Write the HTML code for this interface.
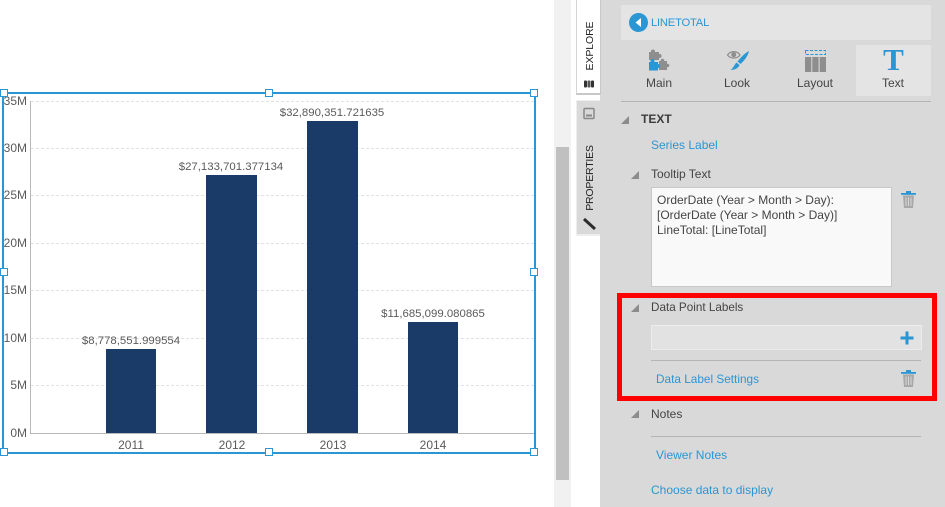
<!DOCTYPE html>
<html><head><meta charset="utf-8"><style>
html,body{margin:0;padding:0;width:945px;height:507px;overflow:hidden;background:#fff}
body{position:relative;font-family:"Liberation Sans",sans-serif;font-size:12px;color:#444}
.a{position:absolute}
.t{position:absolute;white-space:nowrap;line-height:16px}
.l{color:#2a96d4}
.d{color:#444}
.c{color:#5a5a5a;transform:translateX(-50%)}
.v{font-size:11.4px}
.r{color:#5a5a5a;text-align:right;width:27px;left:0}
.g{position:absolute;left:31px;width:503px;border-top:1px dashed #e2e2e2;height:0}
.b{position:absolute;background:#1a3a68}
.h{position:absolute;width:6px;height:6px;background:#fff;border:1px solid #2a96d4}
.tri{position:absolute;width:0;height:0;border-left:8px solid transparent;border-bottom:8px solid #8c8c8c}
.line{position:absolute;height:1px;background:#b4b4b4}
</style></head><body>

<!-- chart -->
<div class="g" style="top:101px"></div>
<div class="g" style="top:148px"></div>
<div class="g" style="top:195px"></div>
<div class="g" style="top:243px"></div>
<div class="g" style="top:290px"></div>
<div class="g" style="top:338px"></div>
<div class="g" style="top:385px"></div>
<div class="a" style="left:30px;top:101px;width:1px;height:333px;background:#b8b8b8"></div>
<div class="a" style="left:30px;top:433px;width:504px;height:1px;background:#b8b8b8"></div>
<div class="b" style="left:106px;top:349px;width:50px;height:84px"></div>
<div class="b" style="left:206px;top:175px;width:51px;height:258px"></div>
<div class="b" style="left:307px;top:121px;width:51px;height:312px"></div>
<div class="b" style="left:408px;top:322px;width:50px;height:111px"></div>

<div class="t r" style="top:93px">35M</div>
<div class="t r" style="top:140px">30M</div>
<div class="t r" style="top:187px">25M</div>
<div class="t r" style="top:235px">20M</div>
<div class="t r" style="top:282px">15M</div>
<div class="t r" style="top:330px">10M</div>
<div class="t r" style="top:377px">5M</div>
<div class="t r" style="top:425px">0M</div>

<div class="t c v" style="left:131px;top:333px">$8,778,551.999554</div>
<div class="t c v" style="left:231px;top:159px">$27,133,701.377134</div>
<div class="t c v" style="left:332px;top:105px">$32,890,351.721635</div>
<div class="t c v" style="left:433px;top:306px">$11,685,099.080865</div>
<div class="t c" style="left:131px;top:437px">2011</div>
<div class="t c" style="left:232px;top:437px">2012</div>
<div class="t c" style="left:333px;top:437px">2013</div>
<div class="t c" style="left:433px;top:437px">2014</div>

<!-- selection -->
<div class="a" style="left:2px;top:92px;width:530px;height:358px;border:2px solid #2a96d4"></div>
<div class="h" style="left:0;top:89px"></div>
<div class="h" style="left:265px;top:89px"></div>
<div class="h" style="left:530px;top:89px"></div>
<div class="h" style="left:0;top:268px"></div>
<div class="h" style="left:530px;top:268px"></div>
<div class="h" style="left:0;top:448px"></div>
<div class="h" style="left:265px;top:448px"></div>
<div class="h" style="left:530px;top:448px"></div>

<!-- scrollbar -->
<div class="a" style="left:554px;top:0;width:17px;height:507px;background:#f1f1f1"></div>
<div class="a" style="left:556px;top:147px;width:13px;height:333px;background:#c0c0c0"></div>

<!-- panel -->
<div class="a" style="left:600px;top:0;width:345px;height:507px;background:#d9d9d9"></div>

<!-- tabs -->
<div class="a" style="left:576px;top:0;width:25px;height:95px;background:#fff;border-left:1px solid #d4d4d4;border-bottom:2px solid #c8c8c8;border-right:1px solid #c8c8c8;box-sizing:border-box"></div>
<div class="a" style="left:576px;top:100px;width:24px;height:136px;background:#d9d9d9;border-left:1px solid #eee;border-top:1px solid #eee;border-bottom:2px solid #eee;box-sizing:border-box"></div>
<div class="t" style="left:590px;top:46px;color:#222;font-size:10.5px;letter-spacing:-.1px;transform:translate(-50%,-50%) rotate(-90deg)">EXPLORE</div>
<div class="t" style="left:590px;top:178px;color:#222;font-size:10.5px;letter-spacing:-.2px;transform:translate(-50%,-50%) rotate(-90deg)">PROPERTIES</div>
<svg class="a" style="left:576px;top:76px" width="24" height="160" viewBox="0 0 24 160">
<rect x="8" y="4.500" width="3" height="7" rx="1" fill="#333"/><rect x="11.500" y="4.500" width="3" height="7" rx="1" fill="#555"/><rect x="15" y="4.500" width="3" height="7" rx="1" fill="#333"/>
<rect x="8" y="32.500" width="10" height="10" rx="1" fill="none" stroke="#888" stroke-width="1.500"/><rect x="10" y="38.500" width="6" height="2" fill="#888"/>
<path d="M8 143L19 153" stroke="#2c2c2c" stroke-width="3"/>
</svg>

<!-- header -->
<div class="a" style="left:621px;top:5px;width:310px;height:35px;background:#e4e4e4"></div>
<svg class="a" style="left:629px;top:13px" width="19" height="19"><circle cx="9.500" cy="9.500" r="9.500" fill="#2a96d4"/><path d="M12 5L6.500 9.500L12 14Z" fill="#fff"/></svg>
<div class="t l" style="left:651px;top:15px;font-size:11.200px;letter-spacing:-.2px">LINETOTAL</div>

<!-- tool icons -->
<div class="a" style="left:856px;top:45px;width:75px;height:51px;background:#e4e4e4"></div>
<svg class="a" style="left:646px;top:48px" width="24" height="24" viewBox="0 0 24 24" fill="#8e8e8e">
<rect x="3" y="4" width="10" height="8"/><circle cx="7" cy="3.500" r="2"/><circle cx="13.500" cy="8" r="2"/>
<rect x="13" y="13" width="8" height="9"/><circle cx="16.500" cy="12.500" r="1.800"/><circle cx="21.500" cy="17.500" r="1.800"/>
<g fill="#2a96d4"><rect x="3" y="14" width="9" height="8.500"/><circle cx="6.500" cy="13" r="2"/><circle cx="12" cy="18" r="2"/></g>
</svg>
<svg class="a" style="left:726px;top:48px" width="24" height="24" viewBox="0 0 24 24">
<path d="M1.500 7C4.500 2.500 11 2.500 14 7C11 11 4.500 11 1.500 7Z" fill="none" stroke="#8e8e8e" stroke-width="1.200"/><circle cx="7.700" cy="6.700" r="2.500" fill="#8e8e8e"/>
<path d="M23 3C22 8 18 13 14.500 16L11.500 13.500C15 9 19 5 23 3Z" fill="#2a96d4"/><path d="M10.500 14.500L13.500 17C12.500 20 9 22 4.500 22C7.500 20 8 17 10.500 14.500Z" fill="#2a96d4"/>
</svg>
<svg class="a" style="left:804px;top:49px" width="23" height="23" viewBox="0 0 23 23">
<rect x="1.500" y="1.500" width="20" height="4" fill="none" stroke="#2a96d4" stroke-dasharray="3 1.500"/>
<rect x="1" y="8" width="6.300" height="15" fill="#8e8e8e"/><rect x="8.300" y="8" width="6.300" height="15" fill="#8e8e8e"/><rect x="15.700" y="8" width="6.300" height="15" fill="#8e8e8e"/>
</svg>
<div class="t" style="left:893.500px;top:43px;transform:translateX(-50%);font-family:'Liberation Serif',serif;font-weight:bold;font-size:31px;line-height:34px;color:#2a96d4">T</div>
<div class="t d c" style="left:659px;top:75px;color:#444">Main</div>
<div class="t d c" style="left:737px;top:75px;color:#444">Look</div>
<div class="t d c" style="left:815px;top:75px;color:#444">Layout</div>
<div class="t d c" style="left:893px;top:75px;color:#444">Text</div>
<div class="line" style="left:621px;top:101px;width:310px"></div>

<!-- TEXT section -->
<div class="tri" style="left:621px;top:116px"></div>
<div class="t" style="left:641px;top:111px;font-weight:bold;color:#3c3c3c">TEXT</div>
<div class="t l" style="left:651px;top:137px">Series Label</div>
<div class="tri" style="left:631px;top:171px"></div>
<div class="t d" style="left:651px;top:166px">Tooltip Text</div>
<div class="a" style="left:651px;top:187px;width:239px;height:98px;background:#f9f9f9;border:1px solid #c8c8c8"></div>
<div class="t d" style="left:657px;top:193px;line-height:15px">OrderDate (Year &gt; Month &gt; Day):<br>[OrderDate (Year &gt; Month &gt; Day)]<br>LineTotal: [LineTotal]</div>
<svg class="a" style="left:900px;top:190px" width="17" height="19" viewBox="0 0 17 19">
<rect x="1" y="3" width="15" height="1.800" fill="#2a96d4"/><rect x="6" y="1" width="5" height="2" fill="#2a96d4"/>
<path d="M3 5.500h11l-1 12.500h-9z" fill="#a8a8a8"/><path d="M6 7.500v8.500M8.500 7.500v8.500M11 7.500v8.500" stroke="#d9d9d9" stroke-width="1"/>
</svg>

<!-- Data Point Labels -->
<div class="tri" style="left:631px;top:304px"></div>
<div class="t d" style="left:651px;top:300px;font-size:11.700px">Data Point Labels</div>
<div class="a" style="left:651px;top:325px;width:269px;height:23px;background:#e2e2e2;border:1px solid #ececec"></div>
<svg class="a" style="left:900px;top:331px" width="14" height="14"><path d="M7 0.500V13.500M0.500 7H13.500" stroke="#2a96d4" stroke-width="3"/></svg>
<div class="line" style="left:651px;top:360px;width:270px"></div>
<div class="t l" style="left:656px;top:371px;font-size:11.800px">Data Label Settings</div>
<svg class="a" style="left:900px;top:369px" width="17" height="19" viewBox="0 0 17 19">
<rect x="1" y="3" width="15" height="1.800" fill="#2a96d4"/><rect x="6" y="1" width="5" height="2" fill="#2a96d4"/>
<path d="M3 5.500h11l-1 12.500h-9z" fill="#a8a8a8"/><path d="M6 7.500v8.500M8.500 7.500v8.500M11 7.500v8.500" stroke="#d9d9d9" stroke-width="1"/>
</svg>
<div class="a" style="left:617px;top:293px;width:310px;height:98px;border:5px solid #ff0000"></div>

<!-- Notes -->
<div class="tri" style="left:631px;top:410px"></div>
<div class="t d" style="left:651px;top:406px">Notes</div>
<div class="line" style="left:651px;top:436px;width:270px"></div>
<div class="t l" style="left:656px;top:447px">Viewer Notes</div>
<div class="t l" style="left:651px;top:482px">Choose data to display</div>
</body></html>
